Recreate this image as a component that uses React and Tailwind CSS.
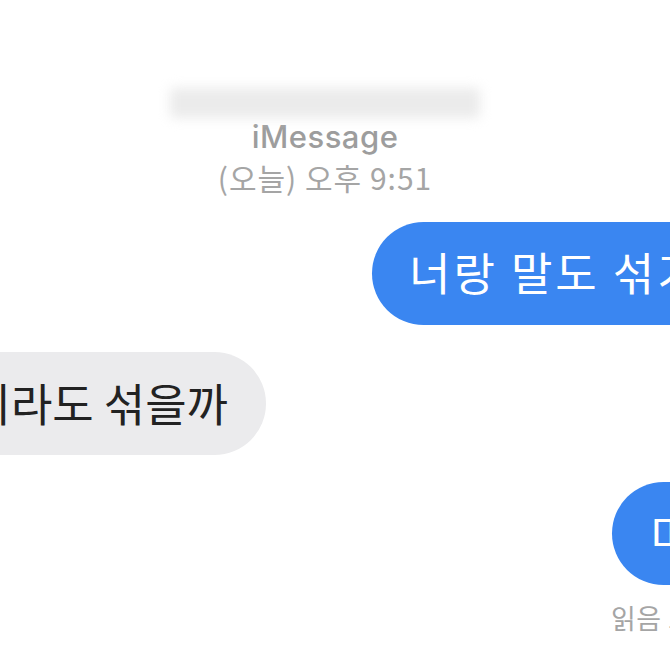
export default function App() {
  return (
    <div className="w-[670px] h-[670px] overflow-hidden bg-white font-['Inter','Noto_Sans_CJK_KR',sans-serif]">
      <div className="flex flex-col">
        {/* header */}
        <div className="flex flex-col items-center pr-[20px] pt-[88px]">
          <div className="w-[310px] h-[30px] shrink-0 bg-[#ebebeb] blur-[6px] rounded" />
          <div className="h-[38px] text-[31px] leading-[38px] font-medium text-[#9d9d9d] tracking-[0.5px]">iMessage</div>
          <div className="mt-[2px] h-[38px] text-[30px] leading-[38px] text-[#a5a5a5] tracking-[1px] font-['Noto_Sans_CJK_KR',sans-serif]">(오늘) 오후 9:51</div>
        </div>

        {/* sent */}
        <div className="flex justify-start mt-[26px] pl-[372px]">
          <div className="shrink-0 h-[103px] rounded-[52px] bg-[#3a86f1] pl-[37px] pr-[40px] flex items-center whitespace-nowrap">
            <span className="text-[45px] text-white font-['Noto_Sans_CJK_KR',sans-serif] tracking-[3px] -mt-[3px]">너랑 말도 섞기 싫어</span>
          </div>
        </div>

        {/* received */}
        <div className="flex justify-end mt-[27px] w-[266px]">
          <div className="shrink-0 h-[103px] rounded-[52px] bg-[#ebebed] pl-[40px] pr-[38px] flex items-center whitespace-nowrap">
            <span className="text-[45px] text-[#222] font-['Noto_Sans_CJK_KR',sans-serif] tracking-[0px] -mt-[2px]">몸이라도 섞을까</span>
          </div>
        </div>

        {/* sent 2 */}
        <div className="flex justify-start mt-[27px] pl-[612px]">
          <div className="shrink-0 h-[103px] rounded-[52px] bg-[#3a86f1] pl-[38px] pr-[40px] flex items-center whitespace-nowrap">
            <span className="text-[45px] text-white font-['Noto_Sans_CJK_KR',sans-serif]">미안</span>
          </div>
        </div>
        <div className="pl-[611px] mt-[14px] whitespace-nowrap text-[27px] leading-[38px] text-[#a5a5a5] tracking-[0.5px] font-['Noto_Sans_CJK_KR',sans-serif]">
          읽음 오후 9:52
        </div>
      </div>
    </div>
  );
}
